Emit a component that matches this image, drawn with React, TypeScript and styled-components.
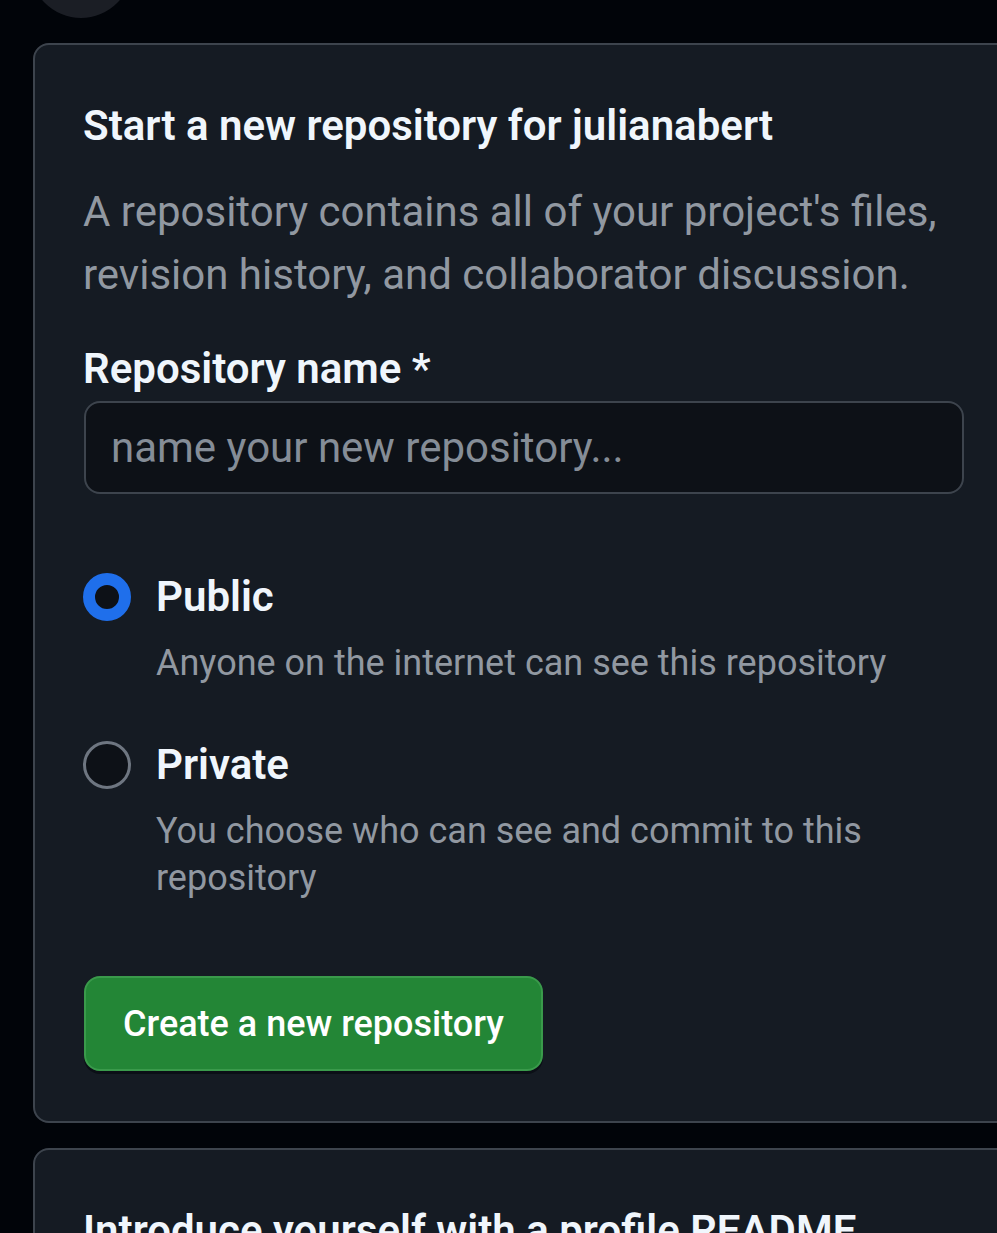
import React from "react";
import styled, { createGlobalStyle } from "styled-components";

const Global = createGlobalStyle`
  html, body {
    margin: 0;
    padding: 0;
    background: #010409;
    overflow: hidden;
  }
  body {
    font-family: Roboto, "Noto Sans", "Liberation Sans", sans-serif;
    color: #f0f6fc;
  }
`;

const Page = styled.div`
  width: 997px;
  height: 1233px;
  overflow: hidden;
  display: flex;
  flex-direction: column;
`;

const Avatar = styled.div`
  width: 102px;
  height: 102px;
  border-radius: 50%;
  background: #1b1e25;
  margin-top: -84px;
  margin-left: 30px;
  flex-shrink: 0;
`;

const Card = styled.section<{ $top: number }>`
  box-sizing: border-box;
  width: 1040px;
  flex-shrink: 0;
  margin-left: 33px;
  margin-top: ${(p) => p.$top}px;
  background: #151b23;
  border: 2px solid #3d444d;
  border-radius: 16px;
  padding: 49px 48px 50px;
`;

const Inner = styled.div`
  width: 881px;
  display: flex;
  flex-direction: column;
`;

const Heading = styled.h2`
  margin: 0;
  font-size: 42px;
  line-height: 63px;
  font-weight: 600;
  color: #f0f6fc;
`;

const Description = styled.p`
  margin: 23px 0 0;
  font-size: 42px;
  line-height: 63px;
  font-weight: 400;
  color: #9198a1;
`;

const Label = styled.label`
  margin-top: 31px;
  font-size: 42px;
  line-height: 63px;
  font-weight: 600;
  color: #f0f6fc;
`;

const Input = styled.input`
  box-sizing: border-box;
  margin: 1px 0 0 1px;
  width: 880px;
  height: 93px;
  background: #0d1117;
  border: 2px solid #3d444d;
  border-radius: 16px;
  padding: 0 25px;
  font-family: inherit;
  font-size: 42px;
  color: #f0f6fc;
  outline: none;
  &::placeholder {
    color: #858d97;
  }
`;

const Options = styled.div`
  margin-top: 71px;
  display: flex;
  flex-direction: column;
  gap: 46px;
`;

const Option = styled.div`
  display: grid;
  grid-template-columns: 48px 1fr;
  column-gap: 25px;
`;

const RadioMark = styled.span<{ $checked: boolean }>`
  box-sizing: border-box;
  width: 48px;
  height: 48px;
  align-self: center;
  border-radius: 50%;
  background: #0d1117;
  border: ${(p) => (p.$checked ? "12px solid #1f6feb" : "3px solid #6e7681")};
`;

const OptionTitle = styled.div`
  display: flex;
  align-items: center;
  font-size: 42px;
  line-height: 63px;
  font-weight: 600;
  color: #f0f6fc;
`;

const OptionText = styled.div`
  grid-column: 2;
  margin-top: 12px;
  font-size: 36px;
  line-height: 47px;
  color: #9198a1;
`;

const CreateButton = styled.button`
  align-self: flex-start;
  box-sizing: border-box;
  margin: 74px 0 0 1px;
  height: 95px;
  padding: 0 37px;
  background: #238636;
  border: 2px solid #3a9a4b;
  border-radius: 16px;
  box-shadow: 0 3px 0 rgba(1, 4, 9, 0.5);
  font-family: inherit;
  font-size: 36px;
  font-weight: 500;
  color: #ffffff;
  cursor: pointer;
`;

const options = [
  { title: "Public", text: "Anyone on the internet can see this repository", checked: true },
  { title: "Private", text: "You choose who can see and commit to this repository", checked: false },
];

export default function App() {
  return (
    <>
      <Global />
      <Page>
        <Avatar />
        <Card $top={25}>
          <Inner>
            <Heading>Start a new repository for julianabert</Heading>
            <Description>
              A repository contains all of your project's files, revision history, and collaborator discussion.
            </Description>
            <Label htmlFor="repo-name">Repository name *</Label>
            <Input id="repo-name" placeholder="name your new repository..." />
            <Options>
              {options.map((o) => (
                <Option key={o.title}>
                  <RadioMark $checked={o.checked} />
                  <OptionTitle>{o.title}</OptionTitle>
                  <OptionText>{o.text}</OptionText>
                </Option>
              ))}
            </Options>
            <CreateButton>Create a new repository</CreateButton>
          </Inner>
        </Card>
        <Card $top={25}>
          <Inner>
            <Heading>Introduce yourself with a profile README</Heading>
          </Inner>
        </Card>
      </Page>
    </>
  );
}
